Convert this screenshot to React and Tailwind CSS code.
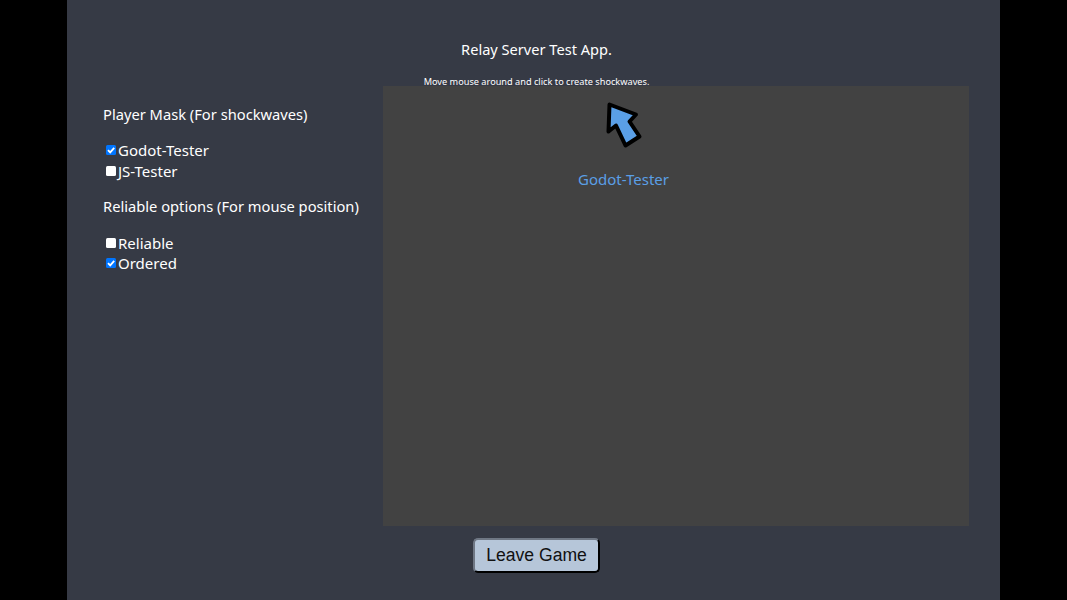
import { useState } from "react";

const font = "font-['Noto_Sans','Open_Sans',sans-serif]";

function Option({ label, defaultChecked }) {
  const [checked, setChecked] = useState(!!defaultChecked);
  return (
    <label className="flex items-center h-[20.5px] pl-[3px] text-[15px] text-white">
      <span className="relative w-[10px] h-[10px] mr-[2px] flex">
        <input
          type="checkbox"
          checked={checked}
          onChange={(e) => setChecked(e.target.checked)}
          className="appearance-none w-full h-full rounded-[1.5px] bg-white checked:bg-[#0075ff]"
        />
        {checked && (
          <svg viewBox="0 0 10 10" className="absolute inset-0 pointer-events-none">
            <path d="M2 5.2 L4.2 7.4 L8.2 2.8" fill="none" stroke="#fff" strokeWidth="1.8" />
          </svg>
        )}
      </span>
      <span>{label}</span>
    </label>
  );
}

function Cursor() {
  return (
    <svg width="50" height="60" viewBox="0 0 50 60" className="absolute left-[217px] top-[12px]">
      <path
        d="M9.5 6.5 L36 16.5 L29.5 23.5 L39.5 38.5 L25.5 47.5 L16 27.5 L8.5 33.5 Z"
        fill="#5a9fe6"
        stroke="#000"
        strokeWidth="4"
        strokeLinejoin="round"
      />
    </svg>
  );
}

export default function App() {
  return (
    <div className={`${font} h-[600px] bg-black flex justify-center overflow-hidden`}>
      <div className="w-[933px] h-full bg-[#363a45] flex flex-col">
        <div className="pl-[6px] pt-[38px] flex flex-col items-center text-white">
          <h1 className="text-[14.6px] leading-[22px] font-normal">Relay Server Test App.</h1>
          <p className="mt-[17px] text-[9.2px] leading-[9px]">Move mouse around and click to create shockwaves.</p>
        </div>
        <div className="flex">
          <div className="w-[316px] pl-[36px] pt-[17px] shrink-0">
            <h2 className="text-[14.7px] leading-[22px] text-white">Player Mask (For shockwaves)</h2>
            <div className="mt-[15px]">
              <Option label="Godot-Tester" defaultChecked />
              <Option label="JS-Tester" />
            </div>
            <h2 className="mt-[14px] text-[14.7px] leading-[22px] text-white">Reliable options (For mouse position)</h2>
            <div className="mt-[15.5px]">
              <Option label="Reliable" />
              <Option label="Ordered" defaultChecked />
            </div>
          </div>
          <div className="relative w-[586px] h-[440px] bg-[#424242]">
            <Cursor />
            <span className="absolute left-[195px] top-[82px] text-[15px] leading-[22px] text-[#5a9fe6]">Godot-Tester</span>
          </div>
        </div>
        <div className="pl-[6px] pt-[12px] flex justify-center">
          <button className="w-[127px] h-[35px] rounded-[5px] bg-[#b6c6d9] border-2 border-t-[#6f7784] border-l-[#6f7784] border-r-black border-b-black font-['Liberation_Sans',sans-serif] text-[17.6px] text-[#111]">
            Leave Game
          </button>
        </div>
      </div>
    </div>
  );
}
